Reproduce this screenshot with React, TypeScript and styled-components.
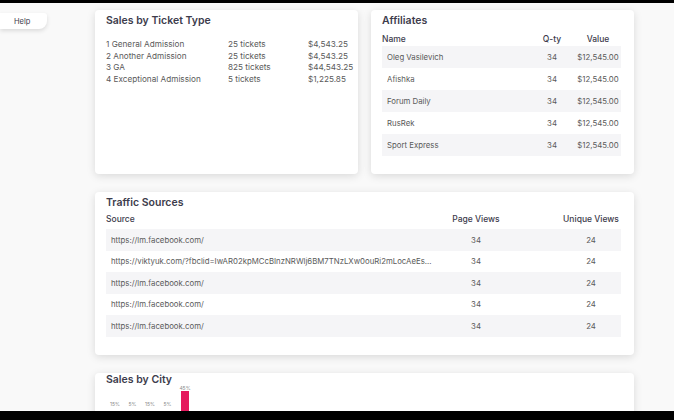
import React from "react";
import styled, { createGlobalStyle } from "styled-components";

const GlobalStyle = createGlobalStyle`
  html, body {
    margin: 0;
    padding: 0;
    background: #000;
  }
  body {
    font-family: Inter, "Noto Sans", "Liberation Sans", sans-serif;
    -webkit-font-smoothing: antialiased;
  }
`;

const Frame = styled.div`
  width: 674px;
  height: 420px;
  padding-top: 3px;
  box-sizing: border-box;
  background: #000;
`;

const Screen = styled.div`
  height: 408px;
  background: #f9f9f9;
  display: flex;
  overflow: hidden;
`;

const Sidebar = styled.aside`
  width: 95px;
  flex-shrink: 0;
  padding-top: 10px;
`;

const HelpTab = styled.div`
  width: 47px;
  height: 16px;
  box-sizing: border-box;
  padding-left: 14px;
  display: flex;
  align-items: center;
  background: #fff;
  border-radius: 0 3px 8px 0;
  box-shadow: 0 2px 4px rgba(0, 0, 0, 0.12);
  font-size: 7.5px;
  color: #3d3c4c;
`;

const Main = styled.main`
  width: 539px;
  padding-top: 7px;
  display: grid;
  grid-template-columns: 263px 263px;
  grid-auto-rows: min-content;
  column-gap: 13px;
  row-gap: 18px;
`;

const Card = styled.section<{ $span?: boolean; $height?: number; $top?: number }>`
  grid-column: ${({ $span }) => ($span ? "1 / span 2" : "auto")};
  height: ${({ $height }) => ($height ? `${$height}px` : "auto")};
  box-sizing: border-box;
  padding: ${({ $top }) => $top ?? 4}px 13px 0 11px;
  background: #fff;
  border-radius: 4px;
  box-shadow: 0 2px 9px rgba(0, 0, 0, 0.13);
`;

const Title = styled.h2`
  margin: 0;
  font-size: 10.5px;
  line-height: 14px;
  font-weight: 600;
  color: #3d3c4c;
`;

const TicketList = styled.div`
  margin-top: 11px;
  display: grid;
  grid-template-columns: 122px 80px auto;
  font-size: 8.2px;
  line-height: 11.5px;
  color: #5a5a5a;
`;

const Table = styled.div<{ $head: number; $body: number }>`
  display: flex;
  flex-direction: column;
  margin-top: ${({ $head }) => $head}px;

  & > :nth-child(2) {
    margin-top: ${({ $body }) => $body}px;
  }
`;

const Row = styled.div<{ $cols: string; $height: number; $striped?: boolean }>`
  display: grid;
  grid-template-columns: ${({ $cols }) => $cols};
  align-items: center;
  height: ${({ $height }) => $height}px;
  padding-left: 5px;
  font-size: 7.8px;
  color: #5a5a5a;
  background: ${({ $striped }) => ($striped ? "#f5f5f7" : "transparent")};
`;

const HeadRow = styled.div<{ $cols: string }>`
  display: grid;
  grid-template-columns: ${({ $cols }) => $cols};
  align-items: center;
  height: 12px;
  font-size: 8.5px;
  font-weight: 500;
  color: #3d3c4c;
`;

const Cell = styled.div<{ $center?: boolean; $pad?: number }>`
  min-width: 0;
  text-align: ${({ $center }) => ($center ? "center" : "left")};
  padding-left: ${({ $pad }) => $pad ?? 0}px;
  white-space: nowrap;
  overflow: hidden;
  text-overflow: ellipsis;
`;

const Chart = styled.div`
  height: 33px;
  margin-top: -1px;
  padding-left: 3px;
  display: flex;
  align-items: flex-end;
  gap: 5.5px;
`;

const ChartItem = styled.div`
  width: 12px;
  display: flex;
  flex-direction: column;
  align-items: center;
`;

const ChartLabel = styled.span`
  font-size: 5px;
  line-height: 5px;
  color: #8a8a8a;
`;

const Bar = styled.div<{ $hot?: boolean }>`
  width: 8px;
  background: ${({ $hot }) => ($hot ? "#e5195e" : "transparent")};
`;

const tickets = [
  ["1 General Admission", "25 tickets", "$4,543.25"],
  ["2 Another Admission", "25 tickets", "$4,543.25"],
  ["3 GA", "825 tickets", "$44,543.25"],
  ["4 Exceptional Admission", "5 tickets", "$1,225.85"],
];

const affiliates = ["Oleg Vasilevich", "Afishka", "Forum Daily", "RusRek", "Sport Express"];

const sources = [
  "https://lm.facebook.com/",
  "https://viktyuk.com/?fbclid=IwAR02kpMCcBInzNRWlj6BM7TNzLXw0ouRi2mLocAeEs8fd",
  "https://lm.facebook.com/",
  "https://lm.facebook.com/",
  "https://lm.facebook.com/",
];

const cities = [15, 5, 15, 5, 45];

const affCols = "1fr 30px 46px";
const srcCols = "minmax(0, 1fr) 70px 110px";

const App: React.FC = () => {
  return (
    <Frame>
      <GlobalStyle />
      <Screen>
        <Sidebar>
          <HelpTab>Help</HelpTab>
        </Sidebar>
        <Main>
          <Card $height={164}>
            <Title>Sales by Ticket Type</Title>
            <TicketList>
              {tickets.map((t) => (
                <React.Fragment key={t[0]}>
                  <span>{t[0]}</span>
                  <span>{t[1]}</span>
                  <span>{t[2]}</span>
                </React.Fragment>
              ))}
            </TicketList>
          </Card>

          <Card $height={164}>
            <Title>Affiliates</Title>
            <Table $head={5} $body={1}>
              <HeadRow $cols={affCols} style={{ columnGap: 8 }}>
                <Cell>Name</Cell>
                <Cell $center>Q-ty</Cell>
                <Cell $center>Value</Cell>
              </HeadRow>
              {affiliates.map((name, i) => (
                <Row key={name} $cols={affCols} $height={22} $striped={i % 2 === 0} style={{ columnGap: 8 }}>
                  <Cell>{name}</Cell>
                  <Cell $center>34</Cell>
                  <Cell $center>$12,545.00</Cell>
                </Row>
              ))}
            </Table>
          </Card>

          <Card $span $height={163}>
            <Title>Traffic Sources</Title>
            <Table $head={3} $body={4}>
              <HeadRow $cols={srcCols}>
                <Cell>Source</Cell>
                <Cell $center>Page Views</Cell>
                <Cell $center $pad={50}>Unique Views</Cell>
              </HeadRow>
              {sources.map((src, i) => (
                <Row key={i} $cols={srcCols} $height={21.5} $striped={i % 2 === 0}>
                  <Cell style={{ paddingRight: 8 }}>{src}</Cell>
                  <Cell $center>34</Cell>
                  <Cell $center $pad={50}>24</Cell>
                </Row>
              ))}
            </Table>
          </Card>

          <Card $span $top={0}>
            <Title>Sales by City</Title>
            <Chart>
              {cities.map((pct, i) => (
                <ChartItem key={i}>
                  <ChartLabel>{pct}%</ChartLabel>
                  <Bar $hot={pct > 20} style={{ height: Math.max(pct * 0.62, 12) }} />
                </ChartItem>
              ))}
            </Chart>
          </Card>
        </Main>
      </Screen>
    </Frame>
  );
};

export default App;
